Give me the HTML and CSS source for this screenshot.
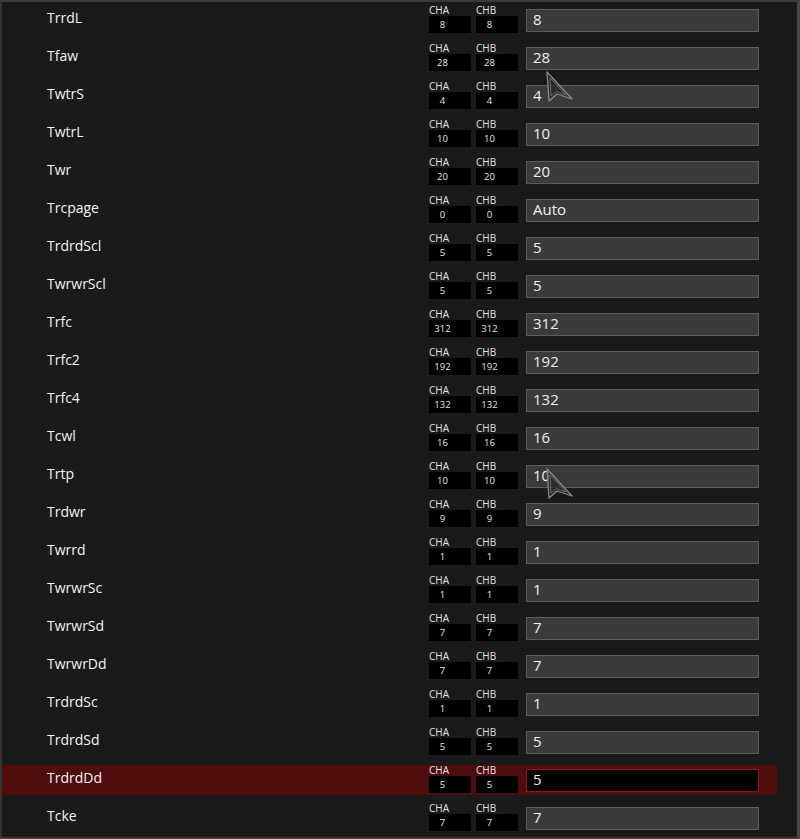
FILE: index.html
```html
<!DOCTYPE html>
<html>
<head>
<meta charset="utf-8">
<link rel="stylesheet" href="styles.css">
</head>
<body>
<div class="frame">
  <div class="list">
    <div class="row"><div class="name">TrrdL</div><div class="ch"><div class="cell"><span class="cl">CHA</span><span class="cv">8</span></div><div class="cell"><span class="cl">CHB</span><span class="cv">8</span></div></div><div class="field">8</div></div>
    <div class="row"><div class="name">Tfaw</div><div class="ch"><div class="cell"><span class="cl">CHA</span><span class="cv">28</span></div><div class="cell"><span class="cl">CHB</span><span class="cv">28</span></div></div><div class="field">28</div></div>
    <div class="row"><div class="name">TwtrS</div><div class="ch"><div class="cell"><span class="cl">CHA</span><span class="cv">4</span></div><div class="cell"><span class="cl">CHB</span><span class="cv">4</span></div></div><div class="field">4</div></div>
    <div class="row"><div class="name">TwtrL</div><div class="ch"><div class="cell"><span class="cl">CHA</span><span class="cv">10</span></div><div class="cell"><span class="cl">CHB</span><span class="cv">10</span></div></div><div class="field">10</div></div>
    <div class="row"><div class="name">Twr</div><div class="ch"><div class="cell"><span class="cl">CHA</span><span class="cv">20</span></div><div class="cell"><span class="cl">CHB</span><span class="cv">20</span></div></div><div class="field">20</div></div>
    <div class="row"><div class="name">Trcpage</div><div class="ch"><div class="cell"><span class="cl">CHA</span><span class="cv">0</span></div><div class="cell"><span class="cl">CHB</span><span class="cv">0</span></div></div><div class="field">Auto</div></div>
    <div class="row"><div class="name">TrdrdScl</div><div class="ch"><div class="cell"><span class="cl">CHA</span><span class="cv">5</span></div><div class="cell"><span class="cl">CHB</span><span class="cv">5</span></div></div><div class="field">5</div></div>
    <div class="row"><div class="name">TwrwrScl</div><div class="ch"><div class="cell"><span class="cl">CHA</span><span class="cv">5</span></div><div class="cell"><span class="cl">CHB</span><span class="cv">5</span></div></div><div class="field">5</div></div>
    <div class="row"><div class="name">Trfc</div><div class="ch"><div class="cell"><span class="cl">CHA</span><span class="cv">312</span></div><div class="cell"><span class="cl">CHB</span><span class="cv">312</span></div></div><div class="field">312</div></div>
    <div class="row"><div class="name">Trfc2</div><div class="ch"><div class="cell"><span class="cl">CHA</span><span class="cv">192</span></div><div class="cell"><span class="cl">CHB</span><span class="cv">192</span></div></div><div class="field">192</div></div>
    <div class="row"><div class="name">Trfc4</div><div class="ch"><div class="cell"><span class="cl">CHA</span><span class="cv">132</span></div><div class="cell"><span class="cl">CHB</span><span class="cv">132</span></div></div><div class="field">132</div></div>
    <div class="row"><div class="name">Tcwl</div><div class="ch"><div class="cell"><span class="cl">CHA</span><span class="cv">16</span></div><div class="cell"><span class="cl">CHB</span><span class="cv">16</span></div></div><div class="field">16</div></div>
    <div class="row"><div class="name">Trtp</div><div class="ch"><div class="cell"><span class="cl">CHA</span><span class="cv">10</span></div><div class="cell"><span class="cl">CHB</span><span class="cv">10</span></div></div><div class="field">10</div></div>
    <div class="row"><div class="name">Trdwr</div><div class="ch"><div class="cell"><span class="cl">CHA</span><span class="cv">9</span></div><div class="cell"><span class="cl">CHB</span><span class="cv">9</span></div></div><div class="field">9</div></div>
    <div class="row"><div class="name">Twrrd</div><div class="ch"><div class="cell"><span class="cl">CHA</span><span class="cv">1</span></div><div class="cell"><span class="cl">CHB</span><span class="cv">1</span></div></div><div class="field">1</div></div>
    <div class="row"><div class="name">TwrwrSc</div><div class="ch"><div class="cell"><span class="cl">CHA</span><span class="cv">1</span></div><div class="cell"><span class="cl">CHB</span><span class="cv">1</span></div></div><div class="field">1</div></div>
    <div class="row"><div class="name">TwrwrSd</div><div class="ch"><div class="cell"><span class="cl">CHA</span><span class="cv">7</span></div><div class="cell"><span class="cl">CHB</span><span class="cv">7</span></div></div><div class="field">7</div></div>
    <div class="row"><div class="name">TwrwrDd</div><div class="ch"><div class="cell"><span class="cl">CHA</span><span class="cv">7</span></div><div class="cell"><span class="cl">CHB</span><span class="cv">7</span></div></div><div class="field">7</div></div>
    <div class="row"><div class="name">TrdrdSc</div><div class="ch"><div class="cell"><span class="cl">CHA</span><span class="cv">1</span></div><div class="cell"><span class="cl">CHB</span><span class="cv">1</span></div></div><div class="field">1</div></div>
    <div class="row"><div class="name">TrdrdSd</div><div class="ch"><div class="cell"><span class="cl">CHA</span><span class="cv">5</span></div><div class="cell"><span class="cl">CHB</span><span class="cv">5</span></div></div><div class="field">5</div></div>
    <div class="row active"><div class="name">TrdrdDd</div><div class="ch"><div class="cell"><span class="cl">CHA</span><span class="cv">5</span></div><div class="cell"><span class="cl">CHB</span><span class="cv">5</span></div></div><div class="field">5</div></div>
    <div class="row"><div class="name">Tcke</div><div class="ch"><div class="cell"><span class="cl">CHA</span><span class="cv">7</span></div><div class="cell"><span class="cl">CHB</span><span class="cv">7</span></div></div><div class="field">7</div></div>
  </div>
  <svg class="cursor cursor-a" width="30" height="34" viewBox="0 0 30 34"><path d="M2 2 L27 29 L12 24 L4 31 Z" fill="rgba(40,40,40,0.75)" stroke="#8a8a8a" stroke-width="1.3" stroke-linejoin="round"/><path d="M5 8 L21 25 L11.5 21.5 L6 26 Z" fill="none" stroke="#6a6a6a" stroke-width="1"/></svg>
  <svg class="cursor cursor-b" width="30" height="34" viewBox="0 0 30 34"><path d="M2 2 L27 29 L12 24 L4 31 Z" fill="rgba(40,40,40,0.75)" stroke="#8a8a8a" stroke-width="1.3" stroke-linejoin="round"/><path d="M5 8 L21 25 L11.5 21.5 L6 26 Z" fill="none" stroke="#6a6a6a" stroke-width="1"/></svg>
</div>
</body>
</html>
```
FILE: styles.css
```css
html, body {
  margin: 0;
  padding: 0;
  background: #1a1a1a;
}
body {
  font-family: "Open Sans", "Noto Sans", sans-serif;
}
.frame {
  position: relative;
  width: 800px;
  height: 839px;
  box-sizing: border-box;
  border-top: 2px solid #3a3a3a;
  border-left: 2px solid #333333;
  border-right: 3px solid #474747;
  border-bottom: 2px solid #3e3e3e;
  background: #1a1a1a;
  padding-top: 3px;
}
.list {
  display: flex;
  flex-direction: column;
  gap: 8px;
  width: 775px;
}
.row {
  height: 30px;
  display: flex;
  align-items: flex-start;
}
.row.active {
  background: #4f0d0e;
}
.name {
  width: 382px;
  padding-left: 45px;
  line-height: 26px;
  font-size: 14px;
  color: #f2f2f2;
}
.ch {
  display: flex;
  gap: 5px;
  width: 97px;
}
.cell {
  display: flex;
  flex-direction: column;
  width: 42px;
}
.cl {
  font-size: 10px;
  line-height: 11px;
  color: #e0e0e0;
  height: 11px;
}
.cv {
  height: 17px;
  box-sizing: border-box;
  padding-right: 15px;
  background: #000;
  color: #e6e6e6;
  font-size: 9.5px;
  line-height: 18px;
  text-align: center;
}
.field {
  margin-top: 4px;
  width: 233px;
  height: 23px;
  box-sizing: border-box;
  background: #3b3b3b;
  border: 1px solid #5c5c5c;
  color: #ececec;
  font-size: 15px;
  line-height: 19px;
  padding-left: 6px;
}
.row.active .field {
  background: #000;
  border-color: #8c1526;
}
.cursor {
  position: absolute;
}
.cursor-a {
  left: 543px;
  top: 68px;
}
.cursor-b {
  left: 543px;
  top: 465px;
}
```
